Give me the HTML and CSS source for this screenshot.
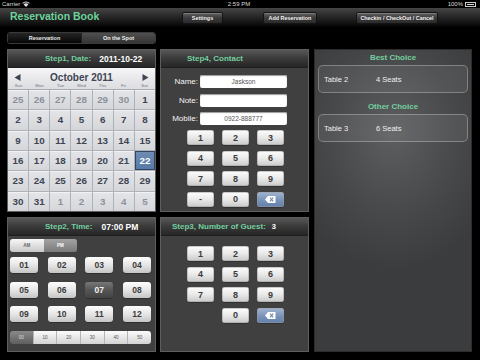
FILE: index.html
```html
<!DOCTYPE html>
<html>
<head>
<meta charset="utf-8">
<link rel="stylesheet" href="styles.css">
</head>
<body>
<div class="status">
  <div class="carrier">Carrier
    <svg class="wifi" width="8" height="6" viewBox="0 0 8 6"><path d="M4 6 L1.6 3.4 A3.4 3.4 0 0 1 6.4 3.4 Z" fill="#ddd"/><path d="M0.3 2.1 A5.2 5.2 0 0 1 7.7 2.1 L7.1 2.7 A4.3 4.3 0 0 0 0.9 2.7 Z" fill="#ddd"/></svg>
  </div>
  <div class="time">2:59 PM</div>
  <div class="batt">100% <span class="battery"><span></span></span></div>
</div>

<div class="titlebar">
  <div class="title">Reservation Book</div>
  <button class="tb settings">Settings</button>
  <button class="tb add">Add Reservation</button>
  <button class="tb checkin">Checkin / CheckOut / Cancel</button>
</div>

<div class="seg">
  <span class="on">Reservation</span>
  <span class="off">On the Spot</span>
</div>

<div class="panels">
  <section class="panel p1">
    <div class="phead h1"><span class="lbl">Step1, Date:</span><span class="val">2011-10-22</span></div>
    <div class="cal">
      <div class="calhead">
        <div class="month">
          <svg width="7" height="7" viewBox="0 0 7 7"><path d="M0.5 3.5 L6.5 0 L6.5 7 Z" fill="#3d4452"/></svg>
          <span>October 2011</span>
          <svg width="7" height="7" viewBox="0 0 7 7"><path d="M6.5 3.5 L0.5 0 L0.5 7 Z" fill="#3d4452"/></svg>
        </div>
        <div class="wdays"><span>Sun</span><span>Mon</span><span>Tue</span><span>Wed</span><span>Thu</span><span>Fri</span><span>Sat</span></div>
      </div>
      <div class="days">
        <span class="o">25</span><span class="o">26</span><span class="o">27</span><span class="o">28</span><span class="o">29</span><span class="o">30</span><span>1</span>
        <span>2</span><span>3</span><span>4</span><span>5</span><span>6</span><span>7</span><span>8</span>
        <span>9</span><span>10</span><span>11</span><span>12</span><span>13</span><span>14</span><span>15</span>
        <span>16</span><span>17</span><span>18</span><span>19</span><span>20</span><span>21</span><span class="sel">22</span>
        <span>23</span><span>24</span><span>25</span><span>26</span><span>27</span><span>28</span><span>29</span>
        <span>30</span><span>31</span><span class="o">1</span><span class="o">2</span><span class="o">3</span><span class="o">4</span><span class="o">5</span>
      </div>
    </div>
  </section>

  <section class="panel p4">
    <div class="phead h4"><span class="lbl">Step4, Contact</span></div>
    <div class="pbody">
      <div class="form">
        <label>Name:</label><div class="input">Jaskson</div>
        <label>Note:</label><div class="input"></div>
        <label>Mobile:</label><div class="input">0922-888777</div>
      </div>
      <div class="keys k4">
        <button class="key">1</button><button class="key">2</button><button class="key">3</button>
        <button class="key">4</button><button class="key">5</button><button class="key">6</button>
        <button class="key">7</button><button class="key">8</button><button class="key">9</button>
        <button class="key">-</button><button class="key">0</button>
        <button class="key del"><svg width="11" height="7" viewBox="0 0 11 7"><path d="M3 0 H10.5 V7 H3 L0 3.5 Z" fill="#fff"/><path d="M5 1.6 L8.2 5.4 M8.2 1.6 L5 5.4" stroke="#6e88b0" stroke-width="1.1"/></svg></button>
      </div>
    </div>
  </section>

  <section class="panel pright">
    <h3 class="choice">Best Choice</h3>
    <div class="box"><span class="tname">Table 2</span><span>4 Seats</span></div>
    <h3 class="choice other">Other Choice</h3>
    <div class="box"><span class="tname">Table 3</span><span>6 Seats</span></div>
  </section>

  <section class="panel p2">
    <div class="phead h2"><span class="lbl">Step2, Time:</span><span class="val">07:00 PM</span></div>
    <div class="pbody b2">
      <div class="ampm"><span class="am">AM</span><span class="pm">PM</span></div>
      <div class="hours">
        <button class="hbtn">01</button><button class="hbtn">02</button><button class="hbtn">03</button><button class="hbtn">04</button>
        <button class="hbtn">05</button><button class="hbtn">06</button><button class="hbtn hsel">07</button><button class="hbtn">08</button>
        <button class="hbtn">09</button><button class="hbtn">10</button><button class="hbtn">11</button><button class="hbtn">12</button>
      </div>
      <div class="mins"><span class="msel">00</span><span>10</span><span>20</span><span>30</span><span>40</span><span>50</span></div>
    </div>
  </section>

  <section class="panel p3">
    <div class="phead h3"><span class="lbl">Step3, Number of Guest:</span><span class="val">3</span></div>
    <div class="pbody">
      <div class="keys k3">
        <button class="key">1</button><button class="key">2</button><button class="key">3</button>
        <button class="key">4</button><button class="key">5</button><button class="key">6</button>
        <button class="key">7</button><button class="key">8</button><button class="key">9</button>
        <div></div><button class="key">0</button>
        <button class="key del"><svg width="11" height="7" viewBox="0 0 11 7"><path d="M3 0 H10.5 V7 H3 L0 3.5 Z" fill="#fff"/><path d="M5 1.6 L8.2 5.4 M8.2 1.6 L5 5.4" stroke="#6e88b0" stroke-width="1.1"/></svg></button>
      </div>
    </div>
  </section>
</div>
</body>
</html>
```

FILE: styles.css
```css
* { box-sizing: border-box; margin: 0; padding: 0; }
html, body { width: 480px; height: 360px; overflow: hidden; }
body { background: #000; font-family: "Liberation Sans", Arial, sans-serif; color: #fff; }
button { font-family: "Liberation Sans", Arial, sans-serif; border: none; cursor: default; }

/* status bar */
.status { height: 8px; display: grid; grid-template-columns: 1fr auto 1fr; align-items: center; padding: 0 4px 0 2px; font-size: 6px; color: #d8d8d8; }
.carrier { display: flex; align-items: center; gap: 2px; }
.time { text-align: center; }
.batt { display: flex; justify-content: flex-end; align-items: center; gap: 2px; }
.battery { width: 11px; height: 5px; border: 1px solid #ccc; padding: 1px; display: flex; }
.battery span { flex: 1; background: #ddd; }

/* title bar */
.titlebar { height: 20px; display: flex; align-items: center; padding-left: 10px; background: linear-gradient(#454545, #262626 45%, #0b0b0b 85%, #000); }
.title { width: 172px; font-size: 10.5px; font-weight: bold; color: #6dd39c; padding-bottom: 5px; }
.tb { height: 12px; font-size: 5.4px; font-weight: bold; color: #f2f2f2; border: 1px solid #141414; border-radius: 2px; background: linear-gradient(#626262, #3a3a3a 50%, #2a2a2a); box-shadow: inset 0 1px 0 rgba(255,255,255,0.18); }
.settings { width: 41px; }
.add { width: 54px; margin-left: 40px; }
.checkin { width: 82px; margin-left: 39px; }

/* segment */
.seg { display: flex; margin: 4px 0 0 7px; width: 149px; height: 12px; border: 1px solid #3a3a3a; border-radius: 3px; overflow: hidden; }
.seg span { flex: 1; display: flex; align-items: center; justify-content: center; font-size: 5.5px; font-weight: bold; color: #eee; }
.seg .on { background: linear-gradient(#262626, #050505); }
.seg .off { background: linear-gradient(#4f4f4f, #353535); border-left: 1px solid #222; }

/* panels grid */
.panels { margin: 5px 0 0 7px; display: grid; grid-template-columns: 149px 149px 159px; grid-template-rows: 163px 135px; column-gap: 4px; row-gap: 5px; }
.panel { border: 1px solid #5e5e5e; background: #404040; display: flex; flex-direction: column; overflow: hidden; }
.p1 { grid-column: 1; grid-row: 1; }
.p4 { grid-column: 2; grid-row: 1; }
.p2 { grid-column: 1; grid-row: 2; }
.p3 { grid-column: 2; grid-row: 2; }
.pright { grid-column: 3; grid-row: 1 / span 2; margin-left: 1px; border-color: #2c2c2c; background: radial-gradient(ellipse 70% 45% at 50% 28%, #5d5e5f, #47484a 60%, #3b3c3d); align-items: stretch; padding: 0 3px; }

.phead { height: 18px; flex: none; display: flex; align-items: center; background: linear-gradient(#575757, #3c3c3c 45%, #262626); border-bottom: 1px solid #1e1e1e; }
.phead .lbl { font-size: 8px; font-weight: bold; color: #74cf9f; }
.phead .val { font-size: 8.5px; font-weight: bold; color: #fff; }
.h1 { padding-left: 37px; gap: 8px; }
.h2 { padding-left: 37px; gap: 9px; }
.h4 { padding-left: 26px; }
.h3 { padding-left: 11px; gap: 6px; }
.h3 .val { font-size: 7.5px; }

/* calendar */
.cal { flex: 1; display: flex; flex-direction: column; background: #c9cbd0; }
.calhead { height: 22px; background: linear-gradient(#f6f6f8, #e6e6e9 60%, #dcdde0); border-bottom: 1px solid #a8abb2; display: flex; flex-direction: column; }
.month { height: 15px; display: flex; align-items: center; justify-content: space-between; padding: 3px 6px 0 6px; font-size: 10px; font-weight: bold; color: #3d4452; }
.wdays { display: grid; grid-template-columns: repeat(7, 1fr); font-size: 4.3px; color: #6f7582; text-align: center; }
.days { flex: 1; display: grid; grid-template-columns: repeat(7, 1fr); grid-template-rows: repeat(6, 1fr); gap: 1px; background: #aeb1b8; }
.days span { display: flex; align-items: center; justify-content: center; font-size: 9.8px; font-weight: bold; color: #3d4452; background: linear-gradient(#e4e5e8, #d5d6da); box-shadow: inset 0 1px 0 #f2f2f4; }
.days span.o { color: #8c9099; }
.days span.sel { background: linear-gradient(#6f8db4, #557aa6); color: #fff; box-shadow: inset 0 0 0 1px #33445e; }

/* form */
.pbody { flex: 1; display: flex; flex-direction: column; }
.form { display: grid; grid-template-columns: 37px 87px; grid-auto-rows: 13px; column-gap: 2px; row-gap: 5.5px; padding-top: 7px; }
.form label { font-size: 8px; color: #f4f4f4; text-align: right; align-self: center; }
.input { background: #fff; border-radius: 2px; font-size: 6.5px; color: #555; display: flex; align-items: center; justify-content: center; box-shadow: inset 0 1px 1px #999; }

/* keypad */
.keys { display: grid; grid-template-columns: repeat(3, 27px); grid-auto-rows: 15px; column-gap: 8px; row-gap: 5.5px; margin-left: 26px; }
.k4 { margin-top: 5px; }
.k3 { margin-top: 10px; }
.key { font-size: 9px; font-weight: bold; color: #3b3b3b; border-radius: 3px; background: linear-gradient(#fdfdfd, #e9e9e9 50%, #c8c8c8); box-shadow: 0 0.5px 0 #222, inset 0 0 0 0.5px #9a9a9a; display: flex; align-items: center; justify-content: center; }
.key.del { background: linear-gradient(#a3b6d2, #7892b9 55%, #6280ab); }

/* time */
.b2 { padding: 3px 4px 0 2px; }
.ampm { display: flex; width: 67px; height: 13px; border-radius: 3px; overflow: hidden; box-shadow: inset 0 0 0 0.5px #777; }
.ampm span { flex: 1; display: flex; align-items: center; justify-content: center; font-size: 4.5px; font-weight: bold; }
.ampm .am { background: linear-gradient(#f7f7f7, #c8c8c8); color: #666; }
.ampm .pm { background: linear-gradient(#a3a3a3, #7a7a7a); color: #fff; }
.hours { display: grid; grid-template-columns: repeat(4, 28px); justify-content: space-between; grid-auto-rows: 16px; row-gap: 8.5px; margin-top: 5px; }
.hbtn { font-size: 8.5px; font-weight: bold; color: #3b3b3b; border-radius: 3px; background: linear-gradient(#fdfdfd, #e6e6e6 50%, #c5c5c5); box-shadow: 0 0.5px 0 #1e1e1e; }
.hbtn.hsel { background: linear-gradient(#777, #555 50%, #444); color: #f4f4f4; }
.mins { display: flex; height: 13px; margin-top: 9px; border-radius: 3px; overflow: hidden; }
.mins span { flex: 1; display: flex; align-items: center; justify-content: center; font-size: 4.5px; color: #555; background: linear-gradient(#fbfbfb, #d3d3d3); border-left: 1px solid #b5b5b5; }
.mins span:first-child { border-left: none; }
.mins .msel { background: linear-gradient(#8a8a8a, #5e5e5e); color: #ddd; }

/* choices */
.choice { font-size: 8px; font-weight: bold; color: #74cf9f; text-align: center; line-height: 10px; margin-top: 3px; }
.choice.other { margin-top: 9px; }
.box { height: 28px; margin-top: 2px; border: 1px solid rgba(255,255,255,0.28); border-radius: 5px; background: rgba(255,255,255,0.07); display: flex; align-items: center; padding-left: 5px; font-size: 7.5px; color: #f0f0f0; }
.tname { width: 52px; }
```
